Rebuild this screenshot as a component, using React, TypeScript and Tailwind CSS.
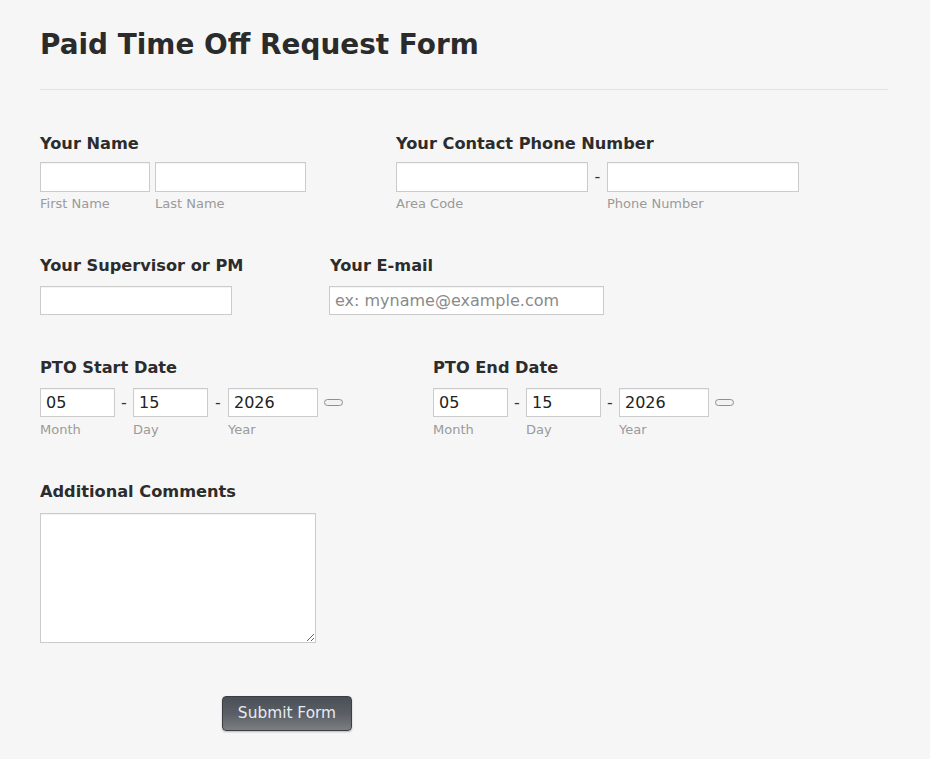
const font = "font-['DejaVu_Sans',Verdana,sans-serif]";
const label = "block text-[16.2px] leading-[20px] font-bold text-[#2c2c2c]";
const sub = "block text-[13px] leading-[16px] text-[#9a9a9a]";
const input =
  "block bg-white border border-[#cbcbcb] px-[5px] text-[16px] text-[#222] outline-none shadow-[inset_0_1px_1px_rgba(0,0,0,0.05)] placeholder:text-[#8a8a8a]";

function Dash({ w }: { w: string }) {
  return <span className={`${w} text-center text-[16px] text-[#333]`}>-</span>;
}

function Pill() {
  return (
    <span className="ml-[6px] block h-[7px] w-[19px] rounded-full border border-[#8f8f8f] bg-[#f2f2f2]" />
  );
}

function DateField({ title, offset, gap }: { title: string; offset: string; gap: string }) {
  return (
    <div className={offset}>
      <label className={label}>{title}</label>
      <div className="mt-[10px] flex items-center">
        <input className={`${input} h-[29px] w-[75px]`} defaultValue="05" />
        <Dash w="w-[18px]" />
        <input className={`${input} h-[29px] w-[75px]`} defaultValue="15" />
        <Dash w={gap} />
        <input className={`${input} h-[29px] w-[90px]`} defaultValue="2026" />
        <Pill />
      </div>
      <div className="mt-[5px] flex">
        <span className={`${sub} w-[93px]`}>Month</span>
        <span className={`${sub} ${gap === "w-[20px]" ? "w-[95px]" : "w-[93px]"}`}>Day</span>
        <span className={sub}>Year</span>
      </div>
    </div>
  );
}

export default function App() {
  return (
    <div className={`min-h-screen bg-[#f6f6f6] ${font}`}>
      <div className="pl-[40px] pr-[42px] pt-[28px] pb-[28px]">
        <h1 className="text-[27.9px] leading-[34px] font-bold text-[#2b2b2b]">
          Paid Time Off Request Form
        </h1>
        <div className="mt-[27px] h-px bg-[#e2e2e2]" />

        {/* name + phone */}
        <div className="mt-[44px] flex">
          <div className="w-[356px]">
            <label className={label}>Your Name</label>
            <div className="mt-[8px] flex gap-[5px]">
              <div>
                <input className={`${input} h-[30px] w-[110px]`} />
                <span className={`${sub} mt-[4px]`}>First Name</span>
              </div>
              <div>
                <input className={`${input} h-[30px] w-[151px]`} />
                <span className={`${sub} mt-[4px]`}>Last Name</span>
              </div>
            </div>
          </div>
          <div>
            <label className={label}>Your Contact Phone Number</label>
            <div className="mt-[8px] flex items-start">
              <div>
                <input className={`${input} h-[30px] w-[192px]`} />
                <span className={`${sub} mt-[4px]`}>Area Code</span>
              </div>
              <span className="flex h-[30px] w-[19px] items-center justify-center text-[16px] text-[#333]">
                -
              </span>
              <div>
                <input className={`${input} h-[30px] w-[192px]`} />
                <span className={`${sub} mt-[4px]`}>Phone Number</span>
              </div>
            </div>
          </div>
        </div>

        {/* supervisor + email */}
        <div className="mt-[44px] flex">
          <div className="w-[289px]">
            <label className={label}>Your Supervisor or PM</label>
            <input className={`${input} mt-[10px] h-[29px] w-[192px]`} />
          </div>
          <div>
            <label className={`${label} pl-px`}>Your E-mail</label>
            <input
              className={`${input} mt-[10px] h-[29px] w-[275px]`}
              placeholder="ex: myname@example.com"
            />
          </div>
        </div>

        {/* dates */}
        <div className="mt-[43px] flex">
          <DateField title="PTO Start Date" offset="w-[393px]" gap="w-[20px]" />
          <DateField title="PTO End Date" offset="" gap="w-[18px]" />
        </div>

        {/* comments */}
        <div className="mt-[44px]">
          <label className={label}>Additional Comments</label>
          <textarea className={`${input} mt-[11px] h-[130px] w-[276px]`} />
        </div>

        <button
          type="button"
          className="mt-[53px] ml-[182px] h-[35px] w-[130px] rounded-[4px] border border-[#3b3e42] bg-linear-to-b from-[#4b5058] via-[#5a5e64] to-[#7b7e81] text-[15.4px] text-[#e4ecf4] shadow-[0_1px_2px_rgba(0,0,0,0.25)]"
        >
          Submit Form
        </button>
      </div>
    </div>
  );
}
